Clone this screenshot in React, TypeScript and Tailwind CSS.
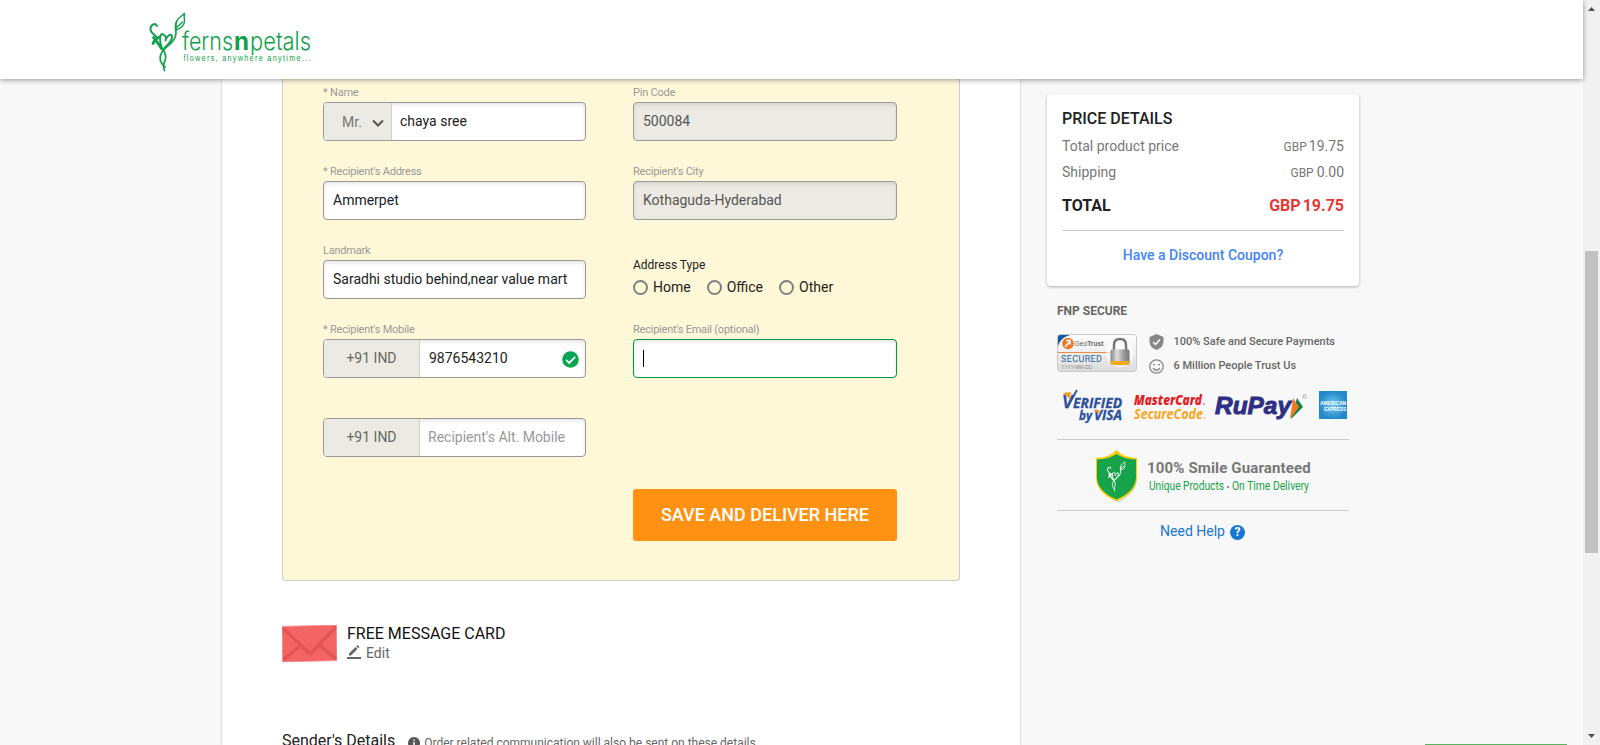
import type { ReactNode } from "react";

const fieldBox = "flex h-[39px] overflow-hidden rounded border text-[14px] shadow-[inset_0_2px_4px_rgba(0,0,0,0.1)]";

function Field({ label, children }: { label: string; children: ReactNode }) {
  return (
    <div>
      <div className="mb-0.5 h-[15px] whitespace-nowrap text-[11px] leading-[15px] tracking-[-0.22px] text-[#999]">{label}</div>
      {children}
    </div>
  );
}

function Input({ value, disabled }: { value: string; disabled?: boolean }) {
  return (
    <div className={`${fieldBox} items-center border-[#999] px-[9px] ${disabled ? "bg-[#ecebe3] text-[#555]" : "bg-white text-[#222]"}`}>
      {value}
    </div>
  );
}

function Phone({ value, placeholder }: { value?: string; placeholder?: string }) {
  return (
    <div className={`${fieldBox} border-[#999] bg-white`}>
      <div className="flex w-[96px] items-center justify-center border-r border-[#d0d0cc] bg-[#ecebe3] text-[#666]">+91 IND</div>
      <div className="flex flex-1 items-center justify-between pl-[9px] pr-1.5">
        {value ? <span className="text-[#222]">{value}</span> : <span className="-ml-px text-[#999]">{placeholder}</span>}
        {value && (
          <svg className="mt-0.5 size-[17px]" viewBox="0 0 17 17">
            <circle cx="8.5" cy="8.5" r="8.3" fill="#00a651" />
            <path d="M4 8.8 7.2 12 13.2 5.8" fill="none" stroke="#fff" strokeWidth="1.8" />
          </svg>
        )}
      </div>
    </div>
  );
}

function Plant({ className, color }: { className: string; color: string }) {
  return (
    <svg className={className} viewBox="0 0 40 62" fill="none" stroke={color} strokeLinecap="round" strokeLinejoin="round">
      <path d="M8 14C6 10.500 1 12.500 1.500 17.500 2 21.500 6 23 8.500 26" strokeWidth="2" />
      <path d="M10.500 25C8 26 5.500 28 4 31.500M4.500 25.500C7 28 9.500 32 12.500 36.500" strokeWidth="2.800" />
      <path d="M13.500 37.500C9.500 28 11 20 14.500 22.500 17 24 17.500 26 16.500 28.500 18 23 22.500 21 23 24.500 23.500 29 19 32 15.500 36" strokeWidth="1.900" />
      <path d="M14 37C17 42 17.500 46 15.500 50 14 53 14.500 56 15.500 58.500M16 55C10 50 10 45 13 40 17 34 27 30 27 21 27 17 25 15 27.500 10" strokeWidth="1.700" />
      <path d="M27 18C30 17 35 15 35.500 9.500 35.700 6 34.500 4.500 35.500 1.500 31 5.500 25.500 7 27 18ZM27 16 33.500 10" strokeWidth="1.500" />
    </svg>
  );
}

function Header() {
  return (
    <header className="relative z-10 h-[79px] shrink-0 bg-white pl-[149px] pt-3 shadow-[0_1px_5px_rgba(0,0,0,0.4)]">
      <div className="flex">
        <Plant className="h-[62px] w-[40px] shrink-0" color="#12a04b" />
        <svg className="-ml-2 mt-2 h-[50px] w-[140px] overflow-visible" viewBox="0 -8 140 50" fill="#12a04b" fontFamily="Inter, sans-serif">
          <text x="1" y="22" fontWeight="300" fontSize="25" textLength="51" lengthAdjust="spacingAndGlyphs">ferns</text>
          <text x="53" y="22" fontWeight="700" fontSize="25" textLength="15" lengthAdjust="spacingAndGlyphs">n</text>
          <text x="69" y="22" fontWeight="300" fontSize="25" textLength="61" lengthAdjust="spacingAndGlyphs">petals</text>
          <text transform="translate(2.500 33) scale(.76 1)" fontFamily="Liberation Sans, sans-serif" fontSize="9.500" textLength="167">flowers, anywhere anytime...</text>
        </svg>
      </div>
    </header>
  );
}

function Radio({ label }: { label: string }) {
  return (
    <span className="flex items-center gap-[5px]">
      <span className="mt-px size-[15px] rounded-full border-2 border-[#808080]" />
      {label}
    </span>
  );
}

function AddressForm() {
  return (
    <section className="h-[502px] rounded-b border border-t-0 border-[#ccc] bg-[#fff8d8] pl-10 pr-[62px] pt-1.5">
      <div className="grid grid-cols-[263px_264px] gap-x-[47px] gap-y-[23px]">
        <Field label="* Name">
          <div className={`${fieldBox} border-[#999] bg-white`}>
            <div className="flex w-[68px] items-center gap-2.5 border-r border-[#d0d0cc] bg-[#ecebe3] pl-[18px] pt-0.5 text-[#777]">
              Mr.
              <svg className="h-2 w-3" viewBox="0 0 12 8" fill="none" stroke="#555" strokeWidth="2">
                <path d="m1 1.500 5 5 5-5" />
              </svg>
            </div>
            <div className="flex items-center pl-2 text-[#222]">chaya sree</div>
          </div>
        </Field>
        <Field label="Pin Code"><Input value="500084" disabled /></Field>
        <Field label="* Recipient's Address"><Input value="Ammerpet" /></Field>
        <Field label="Recipient's City"><Input value="Kothaguda-Hyderabad" disabled /></Field>
        <Field label="Landmark"><Input value="Saradhi studio behind,near value mart" /></Field>
        <div className="pt-[14px] text-[#222]">
          <div className="h-4 text-[12px] leading-4">Address Type</div>
          <div className="mt-1.5 flex h-4 items-center gap-4 text-[14px]">
            <Radio label="Home" />
            <Radio label="Office" />
            <Radio label="Other" />
          </div>
        </div>
        <Field label="* Recipient's Mobile"><Phone value="9876543210" /></Field>
        <Field label="Recipient's Email (optional)">
          <div className={`${fieldBox} items-center border-[#00964b] bg-white pl-[9px]`}>
            <span className="h-[17px] w-px bg-black" />
          </div>
        </Field>
        <Field label=""><Phone placeholder="Recipient's Alt. Mobile" /></Field>
      </div>
      <button className="ml-[310px] mt-8 block h-[52px] w-[264px] rounded-[3px] bg-[#ff9212] pb-0.5 text-[18px] font-medium text-white">
        SAVE AND DELIVER HERE
      </button>
    </section>
  );
}

function MessageCard() {
  return (
    <section className="mt-11 flex h-[37px] gap-2.5">
      <svg className="h-[37px] w-[55px]" viewBox="0 0 55 37">
        <path d="M0 1.500 54.500 0 55 35.500.5 37Z" fill="#f56464" />
        <path d="M1 3 28 29 54 2M1 35 18 21M54 34 37 20" fill="none" stroke="#e25555" strokeWidth="3.500" />
        <path d="M0 1.500 54.500 0 55 35.500.5 37Z" fill="none" stroke="#f98c8c" strokeWidth=".8" />
      </svg>
      <div className="-mt-px">
        <h3 className="h-5 text-[16px] leading-5 text-[#111]">FREE MESSAGE CARD</h3>
        <div className="-mt-px flex h-5 items-center gap-[5px] text-[14px] text-[#666]">
          <svg className="-mt-0.5 h-[14px] w-[14px]" viewBox="0 0 14 14" fill="#666">
            <path d="M0 12h14v2H0zM2 8.500 8.500 2l2 2L4 10.500H2zM9.200 1.300 10.500 0l2 2-1.300 1.300z" />
          </svg>
          Edit
        </div>
      </div>
    </section>
  );
}

function PriceCard() {
  return (
    <section className="h-[192px] rounded bg-white px-[15px] pt-[15px] shadow-[0_1px_3px_rgba(0,0,0,0.3)]">
      <h3 className="h-5 text-[16px] font-medium leading-5 text-[#222]">PRICE DETAILS</h3>
      <div className="mt-1 flex h-[26px] items-center justify-between text-[14px] text-[#777]">
        Total product price
        <span className="flex items-baseline gap-0.5"><span className="text-[12px]">GBP</span>19.75</span>
      </div>
      <div className="flex h-[26px] items-center justify-between text-[14px] text-[#777]">
        Shipping
        <span className="flex items-baseline gap-[3px]"><span className="text-[12px]">GBP</span>0.00</span>
      </div>
      <div className="mt-2 flex h-[26px] items-center justify-between text-[16px] font-bold">
        <span className="text-[#222]">TOTAL</span>
        <span className="flex gap-0.5 text-[#e53935]"><span>GBP</span>19.75</span>
      </div>
      <div className="mt-[11px] border-t border-[#ccc] pt-[14px] text-center text-[14px] font-medium leading-5 text-[#4285f4]">
        Have a Discount Coupon?
      </div>
    </section>
  );
}

function GeoTrust() {
  return (
    <svg className="mt-px h-[39px] w-[80px]" viewBox="0 0 80 39">
      <defs>
        <linearGradient id="seal" x1="0" y1="0" x2="0" y2="1"><stop stopColor="#fff" /><stop offset="1" stopColor="#dcdcde" /></linearGradient>
        <linearGradient id="lock"><stop stopColor="#888" /><stop offset=".35" stopColor="#ddd" /><stop offset=".7" stopColor="#999" /><stop offset="1" stopColor="#777" /></linearGradient>
      </defs>
      <rect x=".5" y=".5" width="79" height="37" rx="3" fill="url(#seal)" stroke="#c8c8ca" />
      <path d="M1 12V3q0-2 2-2h10Q3 4 1 12" fill="#0d58a6" />
      <circle cx="11" cy="9.500" r="5.800" fill="#ef7622" />
      <path d="m8 13 5-6M9 6.500h4v4" stroke="#fff" strokeWidth="1.600" fill="none" />
      <text x="17.500" y="12" fontFamily="Liberation Sans, sans-serif" fontSize="7" fill="#666" textLength="29" lengthAdjust="spacingAndGlyphs">Geo<tspan fontWeight="700">Trust</tspan></text>
      <path d="M1 18.500h52" stroke="#ee8b42" />
      <circle cx="63" cy="19" r="14" fill="#fff" opacity=".6" />
      <text x="4" y="27.500" fontFamily="Roboto, sans-serif" fontSize="9" fill="#2c6494" textLength="41">SECURED</text>
      <text x="4" y="34.500" fontFamily="Liberation Sans, sans-serif" fontSize="6" fill="#888" textLength="31" lengthAdjust="spacingAndGlyphs">YYYY-MM-DD</text>
      <path d="M57 17v-6q0-6 6-6t6 6v6" fill="none" stroke="#777" strokeWidth="2.500" />
      <rect x="53.500" y="15.500" width="19" height="15" rx="1.500" fill="url(#lock)" />
      <path d="M53.500 27h19v3q-9 2.500-19 0z" fill="#f2aa16" />
    </svg>
  );
}

function CardLogos() {
  return (
    <svg className="h-[36px] w-[292px]" viewBox="0 0 292 36" fontFamily="Open Sans, sans-serif" fontWeight="700" fontStyle="italic">
      <g fill="#2c4f9e" stroke="#2c4f9e" strokeWidth=".3">
        <text x="5" y="19" fontSize="19" fontFamily="Liberation Sans, sans-serif" textLength="11" lengthAdjust="spacingAndGlyphs">V</text>
        <text x="16" y="19" fontSize="14" textLength="49" lengthAdjust="spacingAndGlyphs">ERIFIED</text>
        <text x="22" y="31" fontSize="12" textLength="13" lengthAdjust="spacingAndGlyphs">by</text>
        <text x="37" y="31" fontSize="13.500" textLength="28" lengthAdjust="spacingAndGlyphs">VISA</text>
      </g>
      <path d="m6 4 8-1-1 7z" fill="#f49b22" />
      <path d="m36 21 6 0 1 4z" fill="#f49b22" />
      <path d="m10 19 10-18" stroke="#2c4f9e" strokeWidth="1.800" />
      <g fontSize="14" fontWeight="800">
        <text x="77" y="16" fill="#e31e26" textLength="68" lengthAdjust="spacingAndGlyphs">MasterCard</text>
        <text x="77" y="30" fill="#f7a51b" fontWeight="700" textLength="69" lengthAdjust="spacingAndGlyphs">SecureCode</text>
      </g>
      <circle cx="147" cy="15" r=".8" fill="#e31e26" />
      <circle cx="147.500" cy="29" r=".8" fill="#f7a51b" />
      <text x="158" y="25" fontFamily="Liberation Sans, sans-serif" fontSize="23.500" fill="#2d2f83" stroke="#2d2f83" strokeWidth=".9" textLength="76" lengthAdjust="spacingAndGlyphs">RuPay</text>
      <path d="m240 9 6 9-12 12z" fill="#12814a" />
      <path d="m236 9 6 9-9 12z" fill="#f47920" />
      <circle cx="247.500" cy="7.500" r="1.700" fill="none" stroke="#888" strokeWidth=".7" />
      <defs><radialGradient id="amex"><stop stopColor="#76c8f0" /><stop offset="1" stopColor="#2388c9" /></radialGradient></defs>
      <rect x="262" y="2" width="28" height="28" fill="url(#amex)" />
      <g fontFamily="Liberation Sans, sans-serif" fontStyle="normal" fontSize="5.500" fill="#fff">
        <text x="263" y="16" textLength="26" lengthAdjust="spacingAndGlyphs">AMERICAN</text>
        <text x="267" y="21.500" textLength="22" lengthAdjust="spacingAndGlyphs">EXPRESS</text>
      </g>
    </svg>
  );
}

function SecurePanel() {
  return (
    <section className="ml-[10px] mt-[15px] w-[292px] text-[#666]">
      <h4 className="h-5 text-[12px] font-bold leading-5">FNP SECURE</h4>
      <div className="mt-3 flex h-[42px] gap-3">
        <GeoTrust />
        <div className="text-[11px] font-medium">
          <div className="flex h-[18px] items-center gap-[9.5px]">
            <svg className="h-[18px] w-[15px]" viewBox="0 0 15 18">
              <path d="M7.500 1 14.500 4v4.500q0 6-7 8.500-7-2.500-7-8.500V4z" fill="#888" />
              <path d="m4 9 2.500 2.500L11 6.500" fill="none" stroke="#fff" strokeWidth="1.500" />
            </svg>
            100% Safe and Secure Payments
          </div>
          <div className="mt-1.5 flex h-[18px] items-center gap-[9.5px]">
            <svg className="size-[15px]" viewBox="0 0 15 15" fill="none" stroke="#888" strokeWidth="1.300">
              <circle cx="7.500" cy="7.500" r="6.700" />
              <path d="M4 5.700h2m3 0h2M4 9q3.500 4.500 7 0" />
            </svg>
            6 Million People Trust Us
          </div>
        </div>
      </div>
      <div className="mt-[14px] h-[36px]"><CardLogos /></div>
      <div className="mt-3.5 flex h-[72px] border-y border-[#ccc] pl-[39px] pt-2.5">
        <div className="grid h-[53px] w-[42px] shrink-0">
          <svg className="col-start-1 row-start-1 h-[53px] w-[42px]" viewBox="0 0 42 53">
            <path d="M22 2q7 6 19 7v20q0 14-19 24-19-10-19-24z" fill="#ddd" />
            <path d="M20.500 0Q28 8 41 8v19q0 16-20.500 24Q0 43 0 27V8q13 0 20.500-8z" fill="#fc0" />
            <path d="M20.500 4Q28 9 40 9.500V27q0 14-19.500 22.500Q1 41 1 27V9.500Q13 9 20.500 4z" fill="#16a34a" />
          </svg>
          <Plant className="col-start-1 row-start-1 ml-[9px] mt-[11px] h-[32px] w-[24px]" color="#fff" />
        </div>
        <div className="ml-[9px] mt-2">
          <div className="h-5 whitespace-nowrap text-[15px] font-bold leading-5 tracking-[0.15px] text-[#777]">100% Smile Guaranteed</div>
          <svg className="ml-0.5 h-[18px] w-[162px]" viewBox="0 0 162 18" fontFamily="Roboto, sans-serif" fontSize="12" fill="#16a34a">
            <text x="0" y="12" textLength="75" lengthAdjust="spacingAndGlyphs">Unique Products</text>
            <circle cx="79" cy="9" r="1.300" fill="#999" />
            <text x="83" y="12" textLength="77" lengthAdjust="spacingAndGlyphs">On Time Delivery</text>
          </svg>
        </div>
      </div>
      <div className="mt-2.5 flex h-5 items-center justify-center gap-[5px] pr-px text-[14px] text-[#1976d2]">
        Need Help
        <span className="mt-0.5 grid size-[15px] place-items-center rounded-full bg-[#1976d2] text-[12px] font-bold leading-none text-white">?</span>
      </div>
    </section>
  );
}

export default function App() {
  return (
    <div className="flex h-[745px] w-[1600px] overflow-hidden bg-[#f8f8f8] font-[Roboto,sans-serif]">
      <div className="flex w-[1583px] flex-col">
        <Header />
        <div className="flex min-h-0 flex-1 pl-[222px]">
          <main className="w-[798px] shrink-0 overflow-hidden bg-white pl-[60px] pr-[60px] shadow-[0_0_2px_rgba(0,0,0,0.3)]">
            <AddressForm />
            <MessageCard />
            <div className="mt-[69px] flex h-5 items-center whitespace-nowrap text-[16px] text-[#222]">
              Sender's Details
              <svg className="ml-[13px] mt-1 size-3" viewBox="0 0 12 12">
                <circle cx="6" cy="6" r="6" fill="#555" />
                <path d="M6 2.500v1.500M6 5v4" stroke="#fff" strokeWidth="1.500" />
              </svg>
              <span className="ml-1 mt-1 text-[12px] text-[#666]">Order related communication will also be sent on these details.</span>
            </div>
          </main>
          <aside className="ml-[27px] w-[312px] pt-[15px]">
            <PriceCard />
            <SecurePanel />
          </aside>
          <div className="ml-[66px] h-px w-[142px] self-end bg-[#5bb262]" />
        </div>
      </div>
      <div className="flex w-[17px] flex-col items-center bg-[#f1f1f1]">
        <svg className="mt-[7px] h-1 w-[7px]" viewBox="0 0 7 4"><path d="M0 4h7L3.500 0z" fill="#505050" /></svg>
        <div className="mt-[240px] h-[302px] w-[13px] bg-[#c1c1c1]" />
        <svg className="mb-[7px] mt-auto h-1 w-[7px]" viewBox="0 0 7 4"><path d="M0 0h7L3.500 4z" fill="#505050" /></svg>
      </div>
    </div>
  );
}
